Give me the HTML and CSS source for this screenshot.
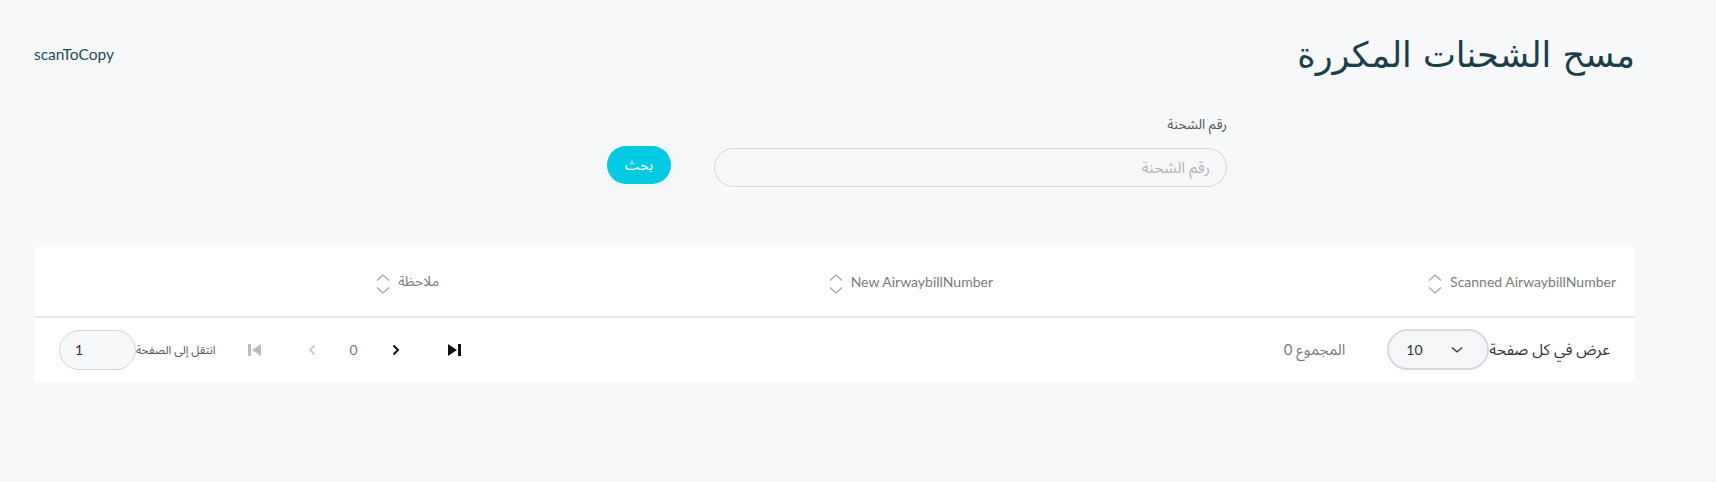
FILE: index.html
```html
<!DOCTYPE html>
<html lang="ar" dir="rtl">
<head>
    <meta charset="UTF-8">
    <meta name="viewport" content="width=device-width, initial-scale=1.0">
    <title>مسح الشحنات المكررة</title>
    <link rel="stylesheet" href="styles.css">
</head>
<body>
    <div class="page">
        <header class="top">
            <h1 class="title">مسح الشحنات المكررة</h1>
            <span class="app-name" dir="ltr">scanToCopy</span>
        </header>

        <form class="search">
            <div class="field">
                <label for="awb">رقم الشحنة</label>
                <input id="awb" type="text" placeholder="رقم الشحنة">
            </div>
            <button type="button" class="btn-search">بحث</button>
        </form>

        <div class="card">
            <table class="grid">
                <thead>
                    <tr>
                        <th class="col-scanned">
                            <span class="th-inner">
                                <span dir="ltr">Scanned AirwaybillNumber</span>
                                <svg class="sort" viewBox="0 0 14 20" width="14" height="20"><path d="M1 6.5 L7 1 L13 6.5 M1 13.5 L7 19 L13 13.5"/></svg>
                            </span>
                        </th>
                        <th class="col-new">
                            <span class="th-inner">
                                <span dir="ltr">New AirwaybillNumber</span>
                                <svg class="sort" viewBox="0 0 14 20" width="14" height="20"><path d="M1 6.5 L7 1 L13 6.5 M1 13.5 L7 19 L13 13.5"/></svg>
                            </span>
                        </th>
                        <th class="col-note">
                            <span class="th-inner">
                                <span>ملاحظة</span>
                                <svg class="sort" viewBox="0 0 14 20" width="14" height="20"><path d="M1 6.5 L7 1 L13 6.5 M1 13.5 L7 19 L13 13.5"/></svg>
                            </span>
                        </th>
                    </tr>
                </thead>
            </table>

            <div class="footer">
                <div class="page-size">
                    <span class="page-size-label">عرض في كل صفحة</span>
                    <div class="select" dir="ltr">
                        <span>10</span>
                        <svg viewBox="0 0 12 8" width="12" height="8"><path d="M1 1.5 L6 6 L11 1.5"/></svg>
                    </div>
                    <span class="total">المجموع 0</span>
                </div>

                <div class="pager">
                    <button type="button" class="pg-btn pg-last">
                        <svg viewBox="0 0 14 14" width="14" height="14"><path d="M0 1 L9 7 L0 13 Z"/><rect x="10" y="1" width="3" height="12"/></svg>
                    </button>
                    <button type="button" class="pg-btn pg-next">
                        <svg viewBox="0 0 8 12" width="8" height="12"><path d="M1.5 1.5 L6 6 L1.5 10.5"/></svg>
                    </button>
                    <span class="pg-current">0</span>
                    <button type="button" class="pg-btn pg-prev" disabled>
                        <svg viewBox="0 0 8 12" width="8" height="12"><path d="M6.5 1.5 L2 6 L6.5 10.5"/></svg>
                    </button>
                    <button type="button" class="pg-btn pg-first" disabled>
                        <svg viewBox="0 0 14 14" width="14" height="14"><rect x="1" y="1" width="3" height="12"/><path d="M14 1 L5 7 L14 13 Z"/></svg>
                    </button>
                    <span class="goto-label">انتقل إلى الصفحة</span>
                    <input class="goto-input" type="text" value="1">
                </div>
            </div>
        </div>
    </div>
</body>
</html>
```

FILE: styles.css
```css
:root {
    --bg: #F7F8FA;
    --title: #1B3E48;
    --accent: #00C9E2;
    --border: #D3D6DD;
    --muted: #7B7B7B;
    --line: #E9E9EF;
    --arabic: "Noto Sans Arabic", "Noto Naskh Arabic", "DejaVu Sans", sans-serif;
}

* {
    box-sizing: border-box;
}

body {
    margin: 0;
    background: var(--bg);
    font-family: Lato, "Noto Sans Arabic", "DejaVu Sans", sans-serif;
    color: #333;
}

.page {
    padding: 30px 81px 0 34px;
}

.top {
    display: flex;
    justify-content: space-between;
    align-items: flex-start;
}

.title {
    margin: 0;
    font-family: "DejaVu Sans", sans-serif;
    font-size: 35px;
    font-weight: normal;
    color: var(--title);
    line-height: 50px;
}

.app-name {
    margin-top: 15px;
    font-size: 15.5px;
    color: #1D4B5C;
}

.search {
    display: flex;
    align-items: flex-end;
    gap: 43px;
    margin: 30px 408px 0 0;
}

.field {
    display: flex;
    flex-direction: column;
    width: 513px;
}

.field label {
    font-family: var(--arabic);
    font-size: 13.5px;
    color: #555;
    margin-bottom: 9px;
}

.field input {
    height: 39px;
    border: 1px solid var(--border);
    border-radius: 20px;
    background: var(--bg);
    padding: 0 16px;
    font-family: var(--arabic);
    font-size: 15.5px;
    outline: none;
}

.field input::placeholder {
    color: #B3B3B3;
}

.btn-search {
    width: 64px;
    height: 38px;
    margin-bottom: 3px;
    border: none;
    border-radius: 19px;
    background: var(--accent);
    color: white;
    font-family: var(--arabic);
    font-size: 14px;
    cursor: pointer;
}

.card {
    margin-top: 60px;
    background: white;
}

.grid {
    width: 100%;
    border-collapse: collapse;
}

.grid th {
    height: 70px;
    padding: 0 19px;
    border-bottom: 2px solid var(--line);
    text-align: right;
    font-weight: normal;
    font-size: 14px;
    color: var(--muted);
}

.col-scanned {
    width: 623px;
}

.col-new {
    width: 554px;
}

.th-inner {
    display: inline-flex;
    align-items: center;
    gap: 8px;
}

.sort {
    margin-top: 4px;
}

.sort path {
    fill: none;
    stroke: #A5A5A5;
    stroke-width: 1.2;
}

.footer {
    display: flex;
    justify-content: space-between;
    align-items: center;
    height: 63px;
    padding: 0 25px;
}

.page-size {
    display: flex;
    align-items: center;
}

.page-size-label {
    font-size: 15.5px;
    color: #333;
}

.select {
    display: flex;
    justify-content: space-between;
    align-items: center;
    width: 102px;
    height: 41px;
    padding: 0 24px 0 17px;
    border: 2px solid #D6D9DF;
    border-radius: 21px;
    background: #F5F6F8;
    font-size: 14px;
    color: #333;
}

.select path {
    fill: none;
    stroke: #333;
    stroke-width: 1.3;
}

.total {
    margin-right: 42px;
    font-size: 15px;
    color: var(--muted);
}

.pager {
    display: flex;
    align-items: center;
}

.pg-btn {
    display: flex;
    justify-content: center;
    align-items: center;
    width: 42px;
    height: 30px;
    padding: 0;
    border: none;
    background: none;
    cursor: pointer;
}

.pg-btn:disabled {
    cursor: default;
}

.pg-last {
    margin-left: 17px;
}

.pg-first {
    margin-right: 16px;
    margin-left: 17px;
}

.pg-last svg {
    fill: #111;
}

.pg-first svg {
    fill: #BDBDBD;
}

.pg-next path,
.pg-prev path {
    fill: none;
    stroke: #111;
    stroke-width: 2;
}

.pg-prev path {
    stroke: #BDBDBD;
    stroke-width: 1.6;
}

.pg-current {
    width: 42px;
    text-align: center;
    font-size: 14px;
    color: #777;
}

.goto-label {
    font-size: 11.5px;
    color: #555;
}

.goto-input {
    width: 77px;
    height: 40px;
    padding: 0 15px;
    border: 1px solid var(--border);
    border-radius: 20px;
    background: var(--bg);
    font-family: Lato, sans-serif;
    font-size: 14px;
    color: #333;
    text-align: left;
    outline: none;
}
```
